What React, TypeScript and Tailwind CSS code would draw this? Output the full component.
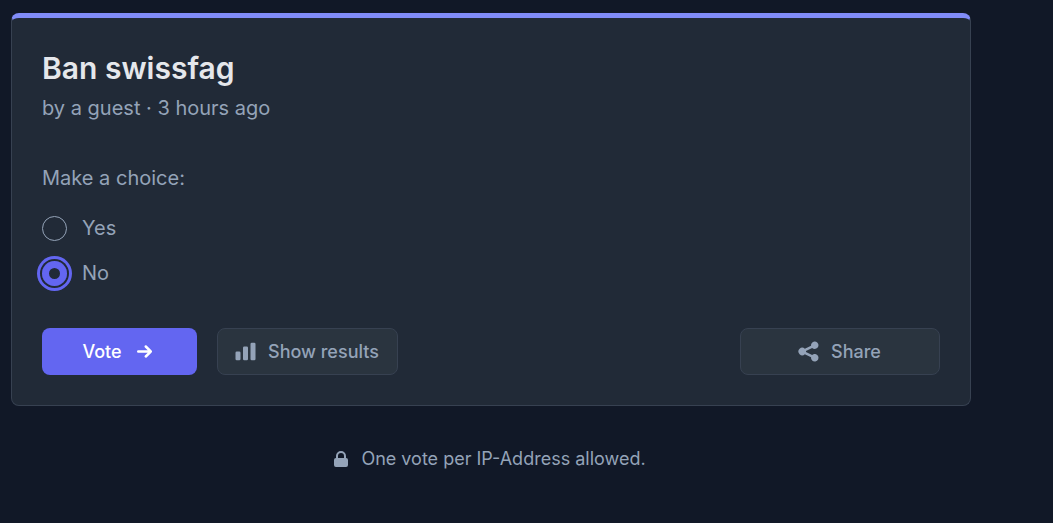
import { useState } from 'react';
import { HiArrowSmRight, HiChartBar, HiLockClosed, HiShare } from 'react-icons/hi';

const options = ['Yes', 'No'];

const secondaryButton =
  'inline-flex items-center justify-center h-[47px] px-[18px] rounded-lg border border-[#374151] bg-[#2a343f] text-lg font-medium text-[#94a3b8] hover:bg-[#323c48] transition-colors';

export default function App() {
  const [choice, setChoice] = useState('No');

  return (
    <div className="min-h-screen bg-[#111827] font-['Inter',sans-serif] text-[#94a3b8] pt-[13px] pl-[11px] pr-[82px]">
      {/* Poll card */}
      <main className="overflow-hidden rounded-lg border border-t-[5px] border-[#374151] border-t-[#818cf8] bg-[#212a37] px-[30px] pt-8 pb-[30px]">
        <h1 className="text-3xl leading-9 font-semibold text-gray-200">Ban swissfag</h1>
        <p className="mt-2 text-xl leading-7">by a guest · 3 hours ago</p>

        <form onSubmit={(e) => e.preventDefault()}>
          <fieldset className="mt-[42px]">
            <legend className="text-xl leading-7">Make a choice:</legend>
            <div className="mt-6 flex flex-col gap-5">
              {options.map((option) => (
                <label key={option} className="flex h-[25px] items-center gap-[15px] text-xl leading-[25px]">
                  <input
                    type="radio"
                    name="choice"
                    value={option}
                    checked={choice === option}
                    onChange={() => setChoice(option)}
                    className="size-[25px] shrink-0 appearance-none rounded-full border border-[#94a3b8] outline-none checked:border-[7px] checked:border-[#6366f1] checked:ring-[3px] checked:ring-[#6366f1] checked:ring-offset-2 checked:ring-offset-[#212a37]"
                  />
                  {option}
                </label>
              ))}
            </div>
          </fieldset>

          <div className="mt-[42px] flex flex-wrap items-center gap-5">
            <button
              type="submit"
              className="inline-flex h-[47px] w-[155px] items-center justify-center rounded-lg bg-[#6366f1] text-lg font-medium text-white transition-colors hover:bg-[#4f46e5]"
            >
              Vote
              <HiArrowSmRight className="ml-[10px] size-[25px]" />
            </button>
            <button type="button" className={secondaryButton}>
              <HiChartBar className="-ml-[3px] mr-[10px] size-[25px]" />
              Show results
            </button>
            <button type="button" className={`${secondaryButton} ml-auto w-[200px]`}>
              <HiShare className="-ml-[3px] mr-[10px] size-[25px]" />
              Share
            </button>
          </div>
        </form>
      </main>

      <p className="mt-[39px] flex items-center justify-center text-lg leading-7">
        <HiLockClosed className="-ml-[5px] mr-[10px] size-5" />
        One vote per IP-Address allowed.
      </p>
    </div>
  );
}
